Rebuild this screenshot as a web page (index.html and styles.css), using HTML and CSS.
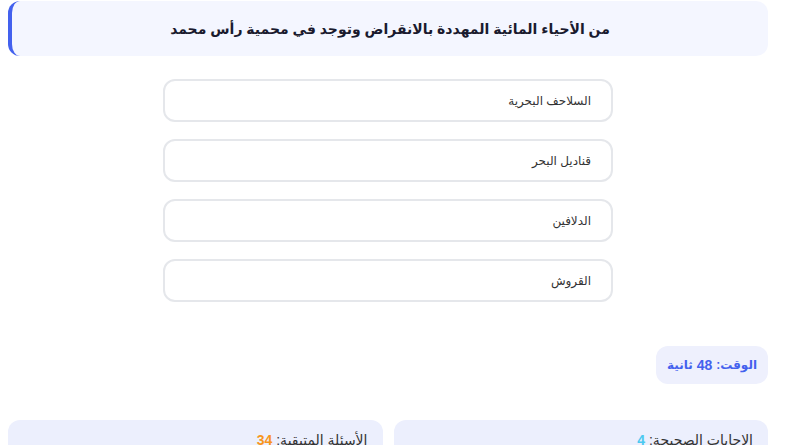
FILE: index.html
```html
<!DOCTYPE html>
<html lang="ar" dir="rtl">
<head>
    <meta charset="UTF-8">
    <meta name="viewport" content="width=device-width, initial-scale=1.0">
    <title>اختبار الأحياء المائية</title>
    <link rel="stylesheet" href="styles.css">
</head>
<body>
    <div class="quiz">
        <!-- السؤال -->
        <div class="question">من الأحياء المائية المهددة بالانقراض وتوجد في محمية رأس محمد</div>

        <!-- الخيارات -->
        <div class="options">
            <button class="option">السلاحف البحرية</button>
            <button class="option">قناديل البحر</button>
            <button class="option">الدلافين</button>
            <button class="option">القروش</button>
        </div>

        <!-- المؤقت -->
        <div class="timer-row">
            <div class="timer">الوقت: <span id="time">48</span> ثانية</div>
        </div>

        <!-- الإحصائيات -->
        <div class="stats">
            <div class="stat-card">الإجابات الصحيحة: <span class="correct">4</span></div>
            <div class="stat-card">الأسئلة المتبقية: <span class="remaining">34</span></div>
        </div>
    </div>
</body>
</html>
```

FILE: styles.css
```css
/* Общие стили */
body {
    font-family: "Liberation Sans", "DejaVu Sans", sans-serif;
    margin: 0;
    background-color: #ffffff;
    color: #222;
}
.quiz {
    width: 760px;
    margin: 1px 17px 0 auto;
}
/* السؤال */
.question {
    height: 55px;
    box-sizing: border-box;
    display: flex;
    align-items: center;
    justify-content: center;
    background-color: #f4f6ff;
    border-left: 4px solid #4361ee;
    border-radius: 12px;
    font-size: 14px;
    font-weight: bold;
    color: #1a1a2e;
}
/* الخيارات */
.options {
    width: 450px;
    margin: 23px auto 0;
    display: flex;
    flex-direction: column;
    gap: 17px;
}
.option {
    height: 43px;
    box-sizing: border-box;
    padding: 0 20px;
    background-color: #ffffff;
    border: 2px solid #e5e7eb;
    border-radius: 12px;
    font-family: inherit;
    font-size: 12px;
    color: #333;
    text-align: right;
    cursor: pointer;
}
.option:hover {
    border-color: #4361ee;
}
/* المؤقت */
.timer-row {
    display: flex;
    justify-content: flex-start;
    margin-top: 44px;
}
.timer {
    height: 38px;
    box-sizing: border-box;
    padding: 0 11px;
    display: flex;
    align-items: center;
    gap: 4px;
    background-color: #eef0fd;
    border-radius: 12px;
    font-size: 12px;
    font-weight: bold;
    color: #4361ee;
}
.timer #time {
    font-size: 14px;
}
/* الإحصائيات */
.stats {
    display: grid;
    grid-template-columns: 1fr 1fr;
    gap: 11px;
    margin-top: 36px;
}
.stat-card {
    height: 60px;
    box-sizing: border-box;
    padding: 12px 15px;
    background-color: #eceffd;
    border-radius: 12px;
    font-size: 14px;
    color: #333;
}
.correct {
    color: #4cc9f0;
    font-weight: bold;
}
.remaining {
    color: #f8961e;
    font-weight: bold;
}
```
